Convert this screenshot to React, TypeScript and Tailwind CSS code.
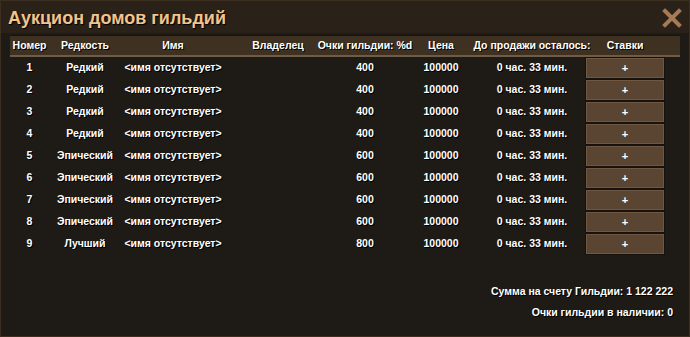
const rows = [
  { n: 1, rarity: "Редкий", points: 400 },
  { n: 2, rarity: "Редкий", points: 400 },
  { n: 3, rarity: "Редкий", points: 400 },
  { n: 4, rarity: "Редкий", points: 400 },
  { n: 5, rarity: "Эпический", points: 600 },
  { n: 6, rarity: "Эпический", points: 600 },
  { n: 7, rarity: "Эпический", points: 600 },
  { n: 8, rarity: "Эпический", points: 600 },
  { n: 9, rarity: "Лучший", points: 800 },
];

const cols = "grid grid-cols-[39px_72px_104px_106px_68px_84px_98px_88px]";
const cell = "flex items-center justify-center whitespace-nowrap";

const App = () => {
  return (
    <div
      className="w-[690px] h-[337px] bg-[#1e1a16] border border-[#3d2f20] flex flex-col text-white"
      style={{ fontFamily: '"Liberation Sans", Arial, sans-serif' }}
    >
      {/* Title bar */}
      <div className="h-[32px] shrink-0 bg-[#2a2119] flex items-center justify-between pl-[7px] pr-[7px]">
        <h1 className="text-[18px] font-bold text-[#f2c48c] [text-shadow:1px_1px_1px_#000] leading-none pt-[2px]">
          Аукцион домов гильдий
        </h1>
        <svg width="20" height="20" viewBox="0 0 20 20" className="mt-[2px]">
          <path d="M3 3 L17 17 M17 3 L3 17" stroke="#a57a55" strokeWidth="4" strokeLinecap="square" />
        </svg>
      </div>

      {/* Table */}
      <div className="pl-[9px] pr-[9px] pt-[2px]">
        <div className={`${cols} h-[22px] bg-[#3e3121] border-t border-[#17120e] border-b-2 border-b-[#6e5c47] text-[10.5px] font-bold [text-shadow:1px_1px_0_#000]`}>
          <div className={cell}>Номер</div>
          <div className={cell}>Редкость</div>
          <div className={cell}>Имя</div>
          <div className={cell}>Владелец</div>
          <div className={cell}>Очки гильдии: %d</div>
          <div className={cell}>Цена</div>
          <div className={cell}>До продажи осталось:</div>
          <div className={cell}>Ставки</div>
        </div>

        <div className="flex flex-col pt-[1px]">
          {rows.map((r) => (
            <div key={r.n} className={`${cols} h-[22px] text-[10.5px] font-bold [text-shadow:1px_1px_0_#000]`}>
              <div className={`${cell} pb-[3px]`}>{r.n}</div>
              <div className={`${cell} pb-[3px]`}>{r.rarity}</div>
              <div className={`${cell} pb-[3px]`}>&lt;имя отсутствует&gt;</div>
              <div className={cell}></div>
              <div className={`${cell} pb-[3px]`}>{r.points}</div>
              <div className={`${cell} pb-[3px]`}>100000</div>
              <div className={`${cell} pb-[3px]`}>0 час. 33 мин.</div>
              <div className="flex items-start justify-center">
                <button className="w-[78px] h-[20px] bg-[#5a4532] border border-[#6f5741] shadow-[0_0_0_1px_#17120e] text-white font-bold text-[11px] leading-none flex items-center justify-center">
                  +
                </button>
              </div>
            </div>
          ))}
        </div>
      </div>

      {/* Footer */}
      <div className="flex flex-col items-end pr-[16px] pt-[28px] gap-[5px] text-[10.5px] font-bold [text-shadow:1px_1px_0_#000]">
        <div>Сумма на счету Гильдии: 1 122 222</div>
        <div>Очки гильдии в наличии: 0</div>
      </div>
    </div>
  );
};

export default App;
